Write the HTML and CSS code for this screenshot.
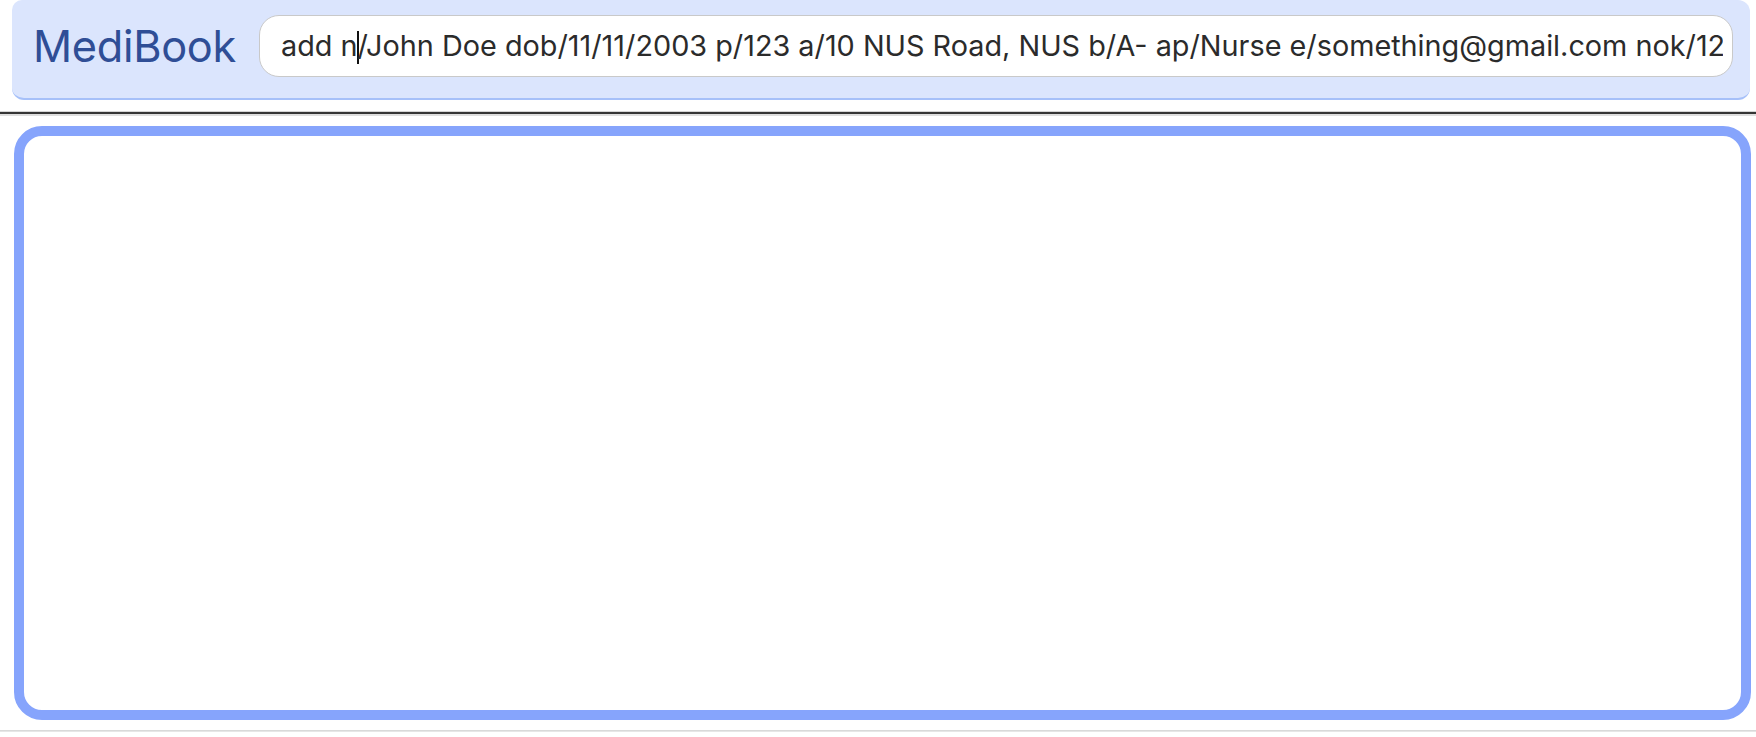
FILE: index.html
```html
<!DOCTYPE html>
<html>
<head>
<meta charset="utf-8">
<link rel="stylesheet" href="styles.css">
</head>
<body>
<div class="app">
  <header class="topbar">
    <div class="brand">MediBook</div>
    <div class="command">
      <div class="command-text">add n<span class="caret"></span>/John Doe dob/11/11/2003 p/123 a/10 NUS Road, NUS b/A- ap/Nurse e/something@gmail.com nok/12345678</div>
    </div>
  </header>
  <div class="separator"></div>
  <main class="panel"></main>
  <div class="footer-line"></div>
</div>
</body>
</html>
```
FILE: styles.css
```css
html, body {
  margin: 0;
  padding: 0;
  background: #ffffff;
  font-family: "Inter", "Noto Sans", sans-serif;
}
.app {
  width: 1756px;
  height: 737px;
  display: flex;
  flex-direction: column;
  overflow: hidden;
}
.topbar {
  margin: 0 6px 0 12px;
  height: 98px;
  box-sizing: content-box;
  background: #dbe5fd;
  border-bottom: 2px solid #a6c0f9;
  border-radius: 10px 12px 12px 12px;
  display: flex;
  align-items: center;
  padding: 0 17px 0 21px;
  gap: 23px;
}
.brand {
  font-size: 43.3px;
  color: #2f4e96;
  letter-spacing: -0.3px;
  margin-top: -6px;
  white-space: nowrap;
}
.command {
  flex: 1;
  height: 60px;
  margin-top: -6px;
  background: #ffffff;
  border: 1.5px solid #c9c9c9;
  border-radius: 20px;
  display: flex;
  align-items: center;
  padding-left: 21px;
  padding-right: 9px;
  overflow: hidden;
}
.command-text {
  font-size: 28.8px;
  color: #2b2b2b;
  white-space: nowrap;
  overflow: hidden;
  min-width: 0;
}
.caret {
  display: inline-block;
  width: 0;
  height: 33px;
  border-left: 2px solid #111;
  vertical-align: -8px;
  margin: 0 -1px;
}
.separator {
  margin-top: 11px;
  height: 2px;
  background: #353535;
  border-top: 1px solid #d4d4d4;
  border-bottom: 2px solid #dedede;
}
.panel {
  margin: 10px 5px 0 14px;
  height: 574px;
  border: 10px solid #86a4fc;
  border-radius: 28px;
  background: #ffffff;
}
.footer-line {
  margin-top: 10px;
  height: 1px;
  border-top: 1px solid #d9d9d9;
  background: #e6e6e6;
}
```
